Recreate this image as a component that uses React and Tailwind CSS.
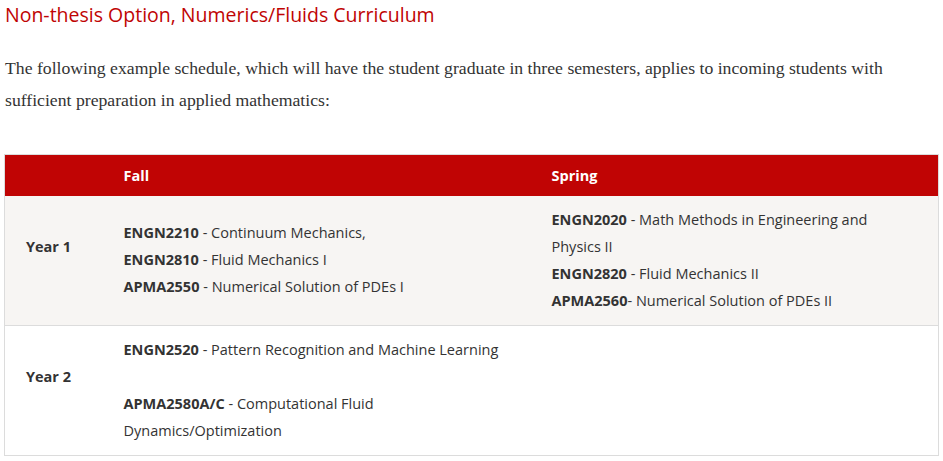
import React from 'react';

const rows = [
  {
    year: 'Year 1',
    bg: 'bg-[#f7f5f3]',
    fall: [
      ['ENGN2210', ' - Continuum Mechanics,'],
      ['ENGN2810', ' - Fluid Mechanics I'],
      ['APMA2550', ' - Numerical Solution of PDEs I'],
    ],
    spring: [
      ['ENGN2020', ' - Math Methods in Engineering and', 'Physics II'],
      ['ENGN2820', ' - Fluid Mechanics II'],
      ['APMA2560', '- Numerical Solution of PDEs II'],
    ],
  },
  {
    year: 'Year 2',
    bg: 'bg-white',
    fall: [
      ['ENGN2520', ' - Pattern Recognition and Machine Learning'],
      null,
      ['APMA2580A/C', ' - Computational Fluid', 'Dynamics/Optimization'],
    ],
    spring: [],
  },
];

const Courses = ({ items }) => (
  <div>
    {items.map((c, i) =>
      c ? (
        <div key={i}>
          <strong className="font-bold">{c[0]}</strong>
          {c[1]}
          {c[2] && (
            <>
              <br />
              {c[2]}
            </>
          )}
        </div>
      ) : (
        <div key={i}>&nbsp;</div>
      )
    )}
  </div>
);

export default function App() {
  return (
    <div className="bg-white w-[943px] h-[461px] overflow-hidden px-[4px]">
      {/* Heading */}
      <h2 className="pl-[1px] pt-[3px] text-[19.5px] leading-[24px] text-[#c00404] font-['Open_Sans',sans-serif]">
        Non-thesis Option, Numerics/Fluids Curriculum
      </h2>

      {/* Intro */}
      <p className="mt-[25px] pl-[1px] pr-[20px] text-[17.7px] leading-[32px] text-[#333] font-['Liberation_Serif',serif]">
        The following example schedule, which will have the student graduate in three semesters, applies to incoming students with sufficient preparation in applied mathematics:
      </p>

      {/* Schedule table */}
      <table className="mt-[38px] w-[935px] border border-[#dcdcdc] border-collapse text-[14.5px] leading-[27px] text-[#333] font-['Open_Sans',sans-serif]">
        <thead>
          <tr className="bg-[#c00404] text-white font-bold">
            <th className="w-[99px] h-[41px]"></th>
            <th className="w-[428px] pl-[20px] text-left">Fall</th>
            <th className="pl-[20px] text-left">Spring</th>
          </tr>
        </thead>
        <tbody>
          {rows.map((r) => (
            <tr key={r.year} className={`${r.bg} border-b border-[#dcdcdc]`}>
              <td className="pl-[21px] pb-[27px] font-bold">{r.year}</td>
              <td className="pl-[20px] pt-[10px] pb-[11px] align-middle">
                <Courses items={r.fall} />
              </td>
              <td className="pl-[20px] pt-[10px] pb-[11px] align-middle">
                <Courses items={r.spring} />
              </td>
            </tr>
          ))}
        </tbody>
      </table>
    </div>
  );
}
